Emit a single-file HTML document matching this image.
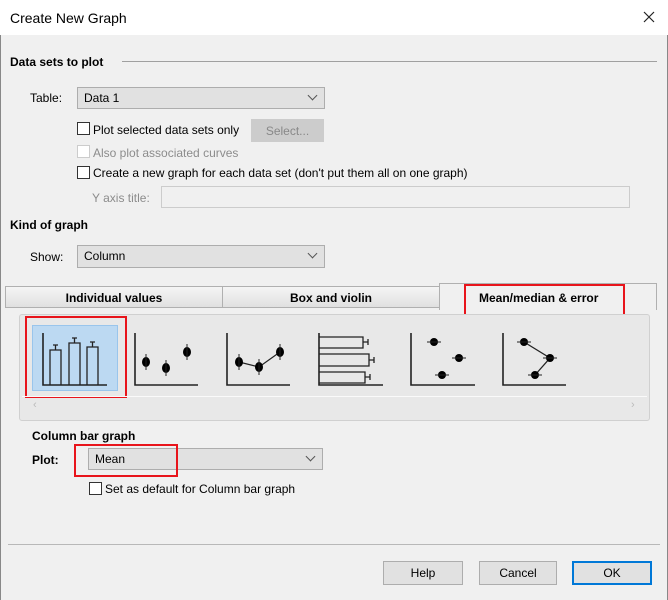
<!DOCTYPE html>
<html><head><meta charset="utf-8"><style>
*{box-sizing:border-box;margin:0;padding:0}
body{width:668px;height:600px;background:#f0f0f0;font-family:"Liberation Sans",sans-serif;font-size:12px;color:#000;position:relative;overflow:hidden}
.a{position:absolute}
.b{font-weight:bold}
.sel{position:absolute;background:#e1e1e1;border:1px solid #adadad}
.sel span{position:absolute;left:6px;top:3px}
.sel i{position:absolute;right:8px;top:4px;width:7px;height:7px;border-right:1px solid #555;border-bottom:1px solid #555;transform:rotate(45deg)}
.cb{position:absolute;width:13px;height:13px;border:1px solid #333;background:#fff}
.btn{position:absolute;background:#e1e1e1;border:1px solid #adadad;text-align:center;line-height:22px}
.red{position:absolute;border:2px solid #e8141b}
</style></head><body>
<div class="a" style="left:0;top:0;width:668px;height:35px;background:#fff"></div>
<div class="a" style="left:10px;top:10px;font-size:14px">Create New Graph</div>
<svg class="a" style="left:643px;top:11px" width="12" height="12"><path d="M1 1L11 11M11 1L1 11" stroke="#222" stroke-width="1.2"/></svg>
<div class="a" style="left:0;top:35px;width:1px;height:565px;background:#888"></div>
<div class="a" style="left:667px;top:35px;width:1px;height:565px;background:#888"></div>

<div class="a b" style="left:10px;top:55px">Data sets to plot</div>
<div class="a" style="left:122px;top:61px;width:535px;height:1px;background:#a0a0a0"></div>
<div class="a" style="left:30px;top:91px">Table:</div>
<div class="sel" style="left:77px;top:87px;width:248px;height:22px"><span>Data 1</span><i></i></div>
<div class="cb" style="left:77px;top:122px"></div>
<div class="a" style="left:93px;top:123px">Plot selected data sets only</div>
<div class="btn" style="left:251px;top:119px;width:73px;height:23px;background:#ccc;border-color:#ccc;color:#888">Select...</div>
<div class="cb" style="left:77px;top:145px;border-color:#ccc"></div>
<div class="a" style="left:93px;top:146px;color:#8c8c8c">Also plot associated curves</div>
<div class="cb" style="left:77px;top:166px"></div>
<div class="a" style="left:93px;top:166px">Create a new graph for each data set (don't put them all on one graph)</div>
<div class="a" style="left:92px;top:191px;color:#8c8c8c">Y axis title:</div>
<div class="a" style="left:161px;top:186px;width:469px;height:22px;border:1px solid #ccc;background:#f0f0f0"></div>

<div class="a b" style="left:10px;top:218px">Kind of graph</div>
<div class="a" style="left:30px;top:250px">Show:</div>
<div class="sel" style="left:77px;top:245px;width:248px;height:23px"><span>Column</span><i></i></div>

<div class="a" style="left:5px;top:286px;width:218px;height:22px;background:linear-gradient(#f5f5f5,#e0e0e0);border:1px solid #b0b0b0;text-align:center;line-height:22px" ><b>Individual values</b></div>
<div class="a" style="left:222px;top:286px;width:218px;height:22px;background:linear-gradient(#f5f5f5,#e0e0e0);border:1px solid #b0b0b0;text-align:center;line-height:22px"><b>Box and violin</b></div>
<div class="a" style="left:439px;top:283px;width:218px;height:27px;background:#f0f0f0;border:1px solid #b0b0b0;border-bottom:none"></div>
<div class="a b" style="left:479px;top:291px">Mean/median &amp; error</div>
<div class="red" style="left:464px;top:284px;width:161px;height:32px"></div>

<div class="a" style="left:19px;top:314px;width:631px;height:107px;background:#e8e8e8;border:1px solid #d0d0d0;border-radius:3px"></div>
<div class="a" style="left:32px;top:325px;width:86px;height:66px;background:#bcd9f2;border:1px solid #99c5ec"></div>
<div class="red" style="left:25px;top:316px;width:102px;height:82px"></div>
<div class="a" style="left:22px;top:396px;width:625px;height:1px;background:#fafafa"></div>
<div class="a" style="left:33px;top:399px;color:#bbb;font-size:11px">‹</div>
<div class="a" style="left:631px;top:399px;color:#bbb;font-size:11px">›</div>
<svg class="a" style="left:0;top:0" width="668" height="600" fill="none" stroke="#222" stroke-width="1.6">
<path d="M43 333V385H107"/>
<path d="M50 385V350H61V385M69 385V343H80V385M87 385V347H98V385M55.5 350V345M53 345H58M74.5 343V338M72 338H77M92.5 347V342M90 342H95" stroke-width="1.3"/>
<path d="M135 333V385H198"/>
<g fill="#000" stroke="none"><ellipse cx="146" cy="362" rx="4" ry="5"/><ellipse cx="166" cy="368" rx="4" ry="5"/><ellipse cx="187" cy="352" rx="4" ry="5"/></g>
<path d="M146 354V370M166 360V376M187 344V360" stroke-width="1"/>
<path d="M227 333V385H290"/>
<path d="M239 362L259 367L280 352" stroke-width="1.2"/>
<g fill="#000" stroke="none"><ellipse cx="239" cy="362" rx="4" ry="5"/><ellipse cx="259" cy="367" rx="4" ry="5"/><ellipse cx="280" cy="352" rx="4" ry="5"/></g>
<path d="M239 354V370M259 359V375M280 344V360" stroke-width="1"/>
<path d="M319 333V385H383"/>
<path d="M319 337H363V348H319M319 354H369V366H319M319 372H365V383H319M363 342H368M368 339V345M369 360H374M374 357V363M365 377H370M370 374V380" stroke-width="1.3"/>
<path d="M411 333V385H475"/>
<g fill="#000" stroke="none"><circle cx="434" cy="342" r="4"/><circle cx="459" cy="358" r="4"/><circle cx="442" cy="375" r="4"/></g>
<path d="M427 342H441M452 358H466M435 375H449" stroke-width="1"/>
<path d="M503 333V385H566"/>
<path d="M524 342L550 358L535 375" stroke-width="1.3"/>
<g fill="#000" stroke="none"><circle cx="524" cy="342" r="4"/><circle cx="550" cy="358" r="4"/><circle cx="535" cy="375" r="4"/></g>
<path d="M517 342H531M543 358H557M528 375H542" stroke-width="1"/>
</svg>

<div class="a b" style="left:32px;top:429px">Column bar graph</div>
<div class="a b" style="left:32px;top:453px">Plot:</div>
<div class="sel" style="left:88px;top:448px;width:235px;height:22px"><span>Mean</span><i></i></div>
<div class="red" style="left:74px;top:444px;width:104px;height:33px"></div>
<div class="cb" style="left:89px;top:482px"></div>
<div class="a" style="left:105px;top:482px">Set as default for Column bar graph</div>

<div class="a" style="left:8px;top:544px;width:652px;height:1px;background:#b8b8b8"></div>
<div class="btn" style="left:383px;top:561px;width:80px;height:24px">Help</div>
<div class="btn" style="left:479px;top:561px;width:78px;height:24px">Cancel</div>
<div class="btn" style="left:572px;top:561px;width:80px;height:24px;border:2px solid #0078d7;line-height:20px">OK</div>
</body></html>
